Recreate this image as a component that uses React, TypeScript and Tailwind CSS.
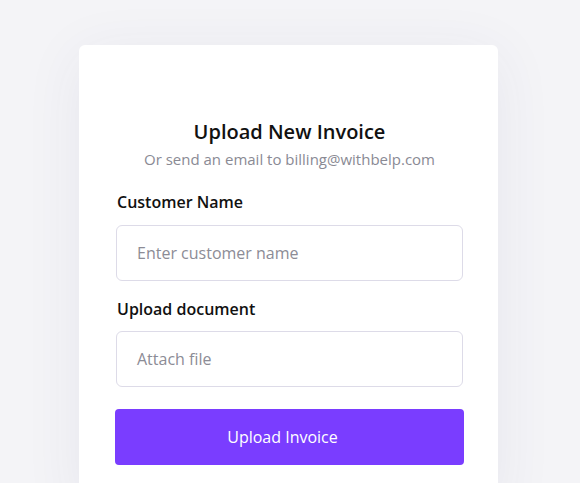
import React from 'react';

const font = { fontFamily: '"Open Sans", "Noto Sans", sans-serif' };

export default function App() {
  return (
    <div style={font} className="min-h-screen w-full bg-[#f4f4f7] pt-[45px] pl-[79px]">
      <div className="w-[419px] h-[460px] bg-white rounded-[6px] shadow-[0_10px_60px_rgba(60,60,110,0.07)] pl-[37px] pr-[35px] pt-[75px]">
        <div className="flex flex-col items-center">
          <h1 className="text-[20px] leading-[24px] font-semibold text-[#111]">Upload New Invoice</h1>
          <p className="mt-[5px] text-[15px] leading-[20px] text-[#8a8a94]">
            Or send an email to billing@withbelp.com
          </p>
        </div>

        <form className="mt-[22px] flex flex-col" onSubmit={(e) => e.preventDefault()}>
          <label className="text-[16px] leading-[22px] font-semibold text-[#111] pl-[1px]">Customer Name</label>
          <input
            type="text"
            placeholder="Enter customer name"
            className="mt-[12px] h-[56px] w-full rounded-[6px] border border-[#dddbe8] px-[20px] text-[16px] text-[#333] placeholder:text-[#8c8c96] outline-none"
          />

          <label className="mt-[17px] text-[16px] leading-[22px] font-semibold text-[#111] pl-[1px]">Upload document</label>
          <div className="mt-[11px] h-[56px] w-full rounded-[6px] border border-[#dddbe8] px-[20px] flex items-center text-[16px] text-[#8c8c96]">
            Attach file
          </div>

          <button
            type="submit"
            className="mt-[22px] -mx-[1px] h-[56px] rounded-[4px] bg-[#7a3dff] text-white text-[16px] pr-[14px]"
          >
            Upload Invoice
          </button>
        </form>
      </div>
    </div>
  );
}
